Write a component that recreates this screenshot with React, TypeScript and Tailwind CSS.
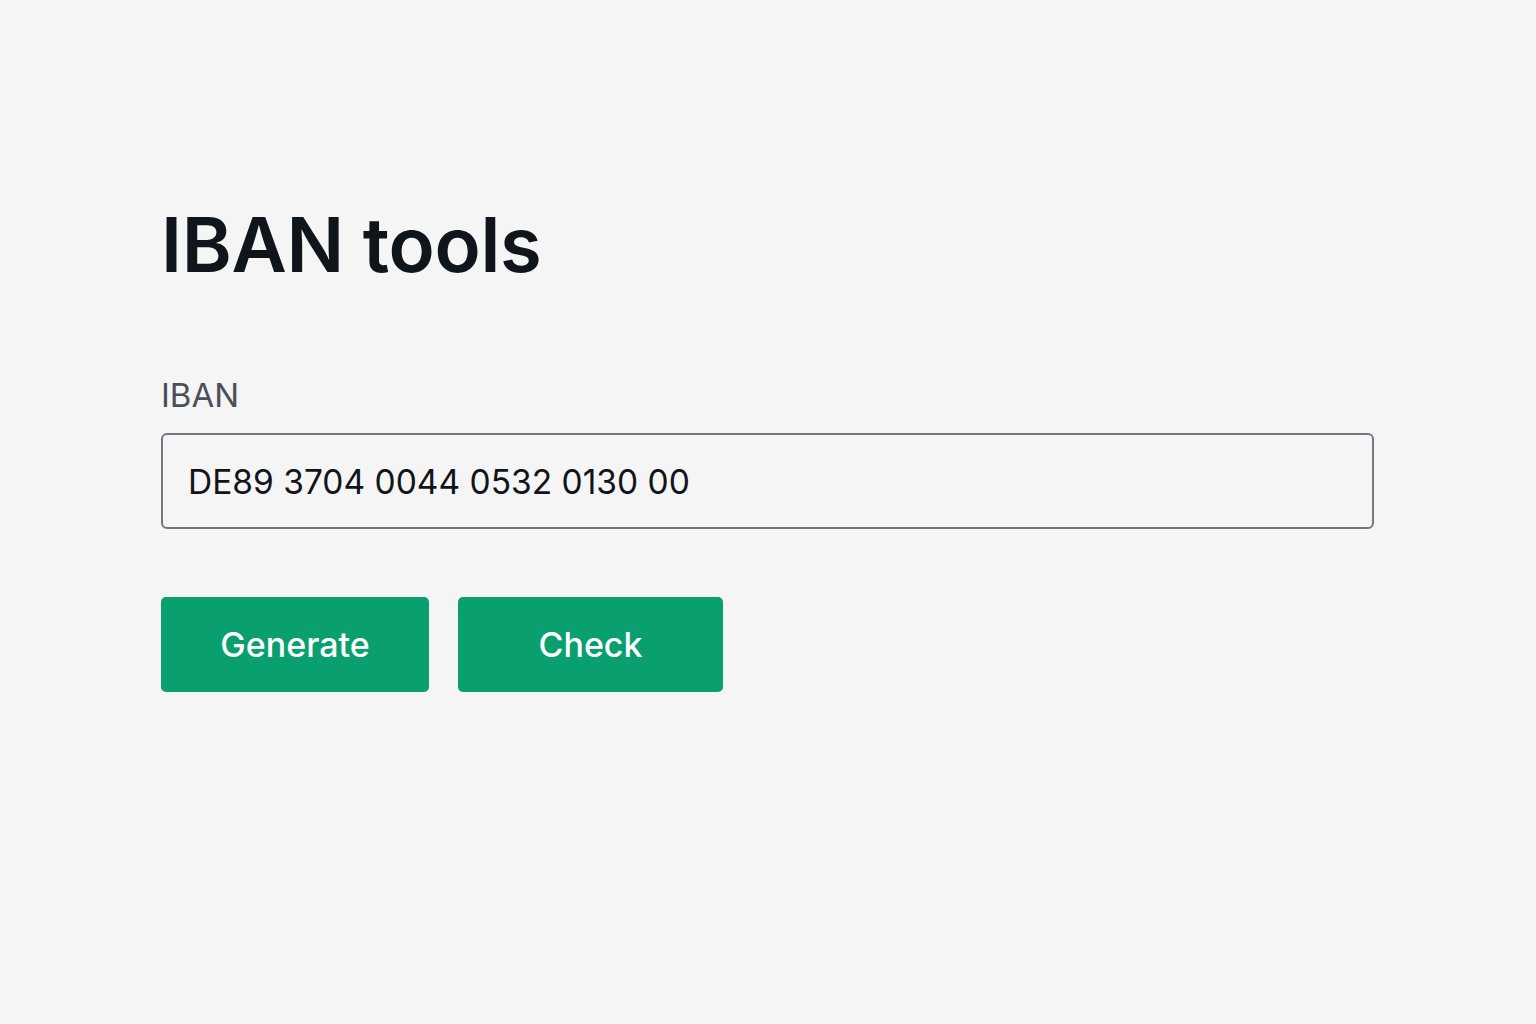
import React from "react";

export default function App() {
  return (
    <div
      className="min-h-screen w-full bg-[#f5f5f5]"
      style={{ fontFamily: "Inter, 'Noto Sans', sans-serif" }}
    >
      <div className="pl-[161px] pr-[162px] pt-[198px]">
        <h1 className="text-[76px] leading-[92px] font-semibold text-[#10151c] tracking-[-0.3px]">
          IBAN tools
        </h1>
        <label className="mt-[85px] block text-[33px] leading-[40px] text-[#4b5058]">
          IBAN
        </label>
        <div className="mt-[18px] h-[96px] w-[1213px] rounded-[6px] border-2 border-[#737780] flex items-center pl-[25px] pt-[4px]">
          <span className="text-[33.5px] text-[#111418] leading-none">
            DE89 3704 0044 0532 0130 00
          </span>
        </div>
        <div className="mt-[68px] flex gap-[29px]">
          <button className="h-[95px] w-[268px] rounded-[5px] bg-[#0a9f6e] text-white text-[34px] font-medium">
            Generate
          </button>
          <button className="h-[95px] w-[265px] rounded-[5px] bg-[#0a9f6e] text-white text-[34px] font-medium">
            Check
          </button>
        </div>
      </div>
    </div>
  );
}
